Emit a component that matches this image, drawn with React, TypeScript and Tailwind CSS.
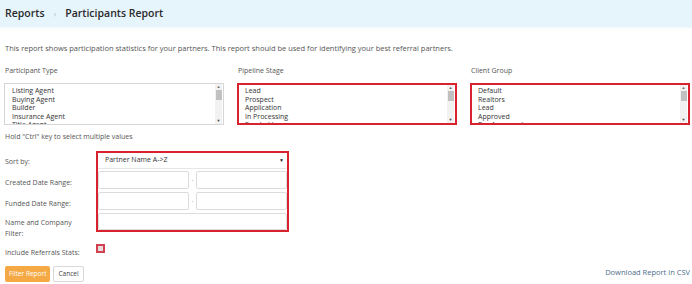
import React from "react";

const font = { fontFamily: "'Open Sans', 'Noto Sans', sans-serif" };

function ListBox({ items, red }: { items: string[]; red?: boolean }) {
  return (
    <div
      className={`relative h-[42px] overflow-hidden bg-white ${
        red ? "border-2 border-[#d8232f]" : "border border-[#d6d6d6]"
      }`}
    >
      <div className={`${red ? "pl-[6px] pt-[2px]" : "pl-[7px] pt-[3px]"} text-[7px] leading-[8.6px] text-[#333]`}>
        {items.map((t) => (
          <div key={t} className="whitespace-nowrap">{t}</div>
        ))}
      </div>
      <div className="absolute right-[1px] top-0 bottom-0 w-[7px] flex flex-col items-center bg-[#f2f2f2]">
        <div className="text-[4px] leading-[6px] text-[#666]">▲</div>
        <div className="w-[6px] h-[10px] bg-[#c1c1c1]" />
        <div className="flex-1" />
        <div className="text-[4px] leading-[6px] text-[#444]">▼</div>
      </div>
    </div>
  );
}

function Input({ className = "" }: { className?: string }) {
  return <div className={`h-[18px] border border-[#dcdcdc] rounded-[2px] bg-white ${className}`} />;
}

export default function App() {
  return (
    <div className="w-[692px] h-[284px] bg-white overflow-hidden text-[#555]" style={font}>
      <div className="h-[27px] bg-[#e6f4fc] flex items-center pl-[5px] text-[10.5px] font-semibold text-[#2a2a2a]">
        <span>Reports</span>
        <span className="mx-[9px] text-[9px] text-[#b8c4cc] font-normal">›</span>
        <span>Participants Report</span>
      </div>
      <div className="h-[3px] bg-gradient-to-b from-[#f3f8fb] to-white" />
      <div className="pl-[5px] mt-[14px] text-[7.5px] leading-[9px] text-[#555] whitespace-nowrap">
        This report shows participation statistics for your partners. This report should be used for identifying your best referral partners.
      </div>
      <div className="grid grid-cols-3 gap-x-[13px] pl-[4px] pr-[2px] mt-[13px]">
        <div>
          <div className="pl-[1px] text-[7px] leading-[9px] mb-[8px]">Participant Type</div>
          <ListBox items={["Listing Agent", "Buying Agent", "Builder", "Insurance Agent", "Title Agent"]} />
        </div>
        <div>
          <div className="pl-[1px] text-[7px] leading-[9px] mb-[8px]">Pipeline Stage</div>
          <ListBox red items={["Lead", "Prospect", "Application", "In Processing", "Funded Loan"]} />
        </div>
        <div>
          <div className="pl-[1px] text-[7px] leading-[9px] mb-[8px]">Client Group</div>
          <ListBox red items={["Default", "Realtors", "Lead", "Approved", "Pre-Approved"]} />
        </div>
      </div>
      <div className="pl-[5px] mt-[7px] text-[7px] leading-[9px]">Hold "Ctrl" key to select multiple values</div>
      <div className="flex pl-[5px] mt-[10px]">
        <div className="w-[91px] text-[7px] leading-[9px]">
          <div className="h-[18px] flex items-center mt-[1px]">Sort by:</div>
          <div className="h-[21px] flex items-center mt-[2px]">Created Date Range:</div>
          <div className="h-[21px] flex items-center">Funded Date Range:</div>
          <div className="pt-[3px] leading-[11px]">
            Name and Company
            <br />
            Filter:
          </div>
        </div>
        <div className="w-[193px] h-[81px] border-2 border-[#d8232f] flex flex-col">
          <div className="h-[18px] flex items-center justify-between pl-[7px] pr-[3px] border-b border-[#e6e6e6] text-[7px] text-[#333]">
            <span>Partner Name A-&gt;Z</span>
            <span className="text-[5px] text-[#222]">▼</span>
          </div>
          <div className="flex items-center mt-[2px]">
            <Input className="w-[91px]" />
            <span className="w-[7px] text-center text-[6px] text-[#888]">-</span>
            <Input className="flex-1" />
          </div>
          <div className="flex items-center mt-[3px]">
            <Input className="w-[91px]" />
            <span className="w-[7px] text-center text-[6px] text-[#888]">-</span>
            <Input className="flex-1" />
          </div>
          <Input className="mt-[3px] w-full" />
        </div>
      </div>
      <div className="flex items-start pl-[5px] mt-[5px] h-[12px]">
        <div className="w-[91px] text-[7px] leading-[9px] pt-[4px]">Include Referrals Stats:</div>
        <div className="w-[9px] h-[9px] border-2 border-[#d04050] bg-[#e8dcdc]" />
      </div>
      <div className="flex items-start justify-between pl-[5px] pr-[2px] mt-[10px]">
        <div className="flex gap-[3px]">
          <div className="h-[16px] px-[4px] flex items-center rounded-[2px] bg-[#f5a945] text-white text-[6.5px]">Filter Report</div>
          <div className="h-[16px] px-[4px] flex items-center rounded-[2px] border border-[#d8d8d8] bg-white text-[#444] text-[6.5px]">Cancel</div>
        </div>
        <div className="text-[7.5px] leading-[10px] text-[#4d6d8a] mt-[1px]">Download Report in CSV</div>
      </div>
    </div>
  );
}
